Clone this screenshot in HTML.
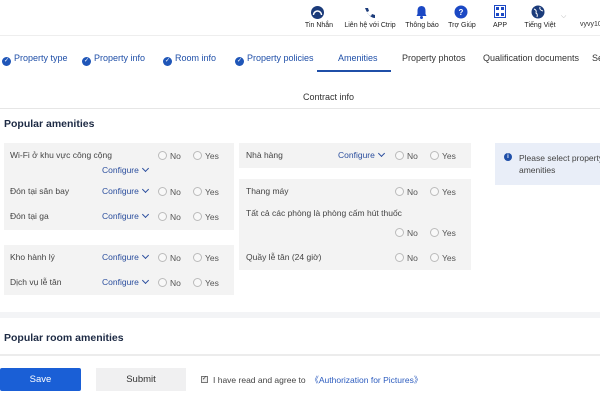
<!DOCTYPE html>
<html><head><meta charset="utf-8"><style>
*{margin:0;padding:0;box-sizing:border-box}
body{width:600px;height:400px;overflow:hidden;background:#fff;font-family:"Liberation Sans",sans-serif;font-size:9px;color:#333;position:relative}
.a{position:absolute;white-space:nowrap}
.ic{position:absolute;text-align:center;font-size:7px;color:#222}
.tab{position:absolute;top:53px;font-size:9px;color:#333}
.tab.d{color:#1f4fa8}
.tab.d:before{content:"✓";display:inline-block;width:9px;height:9px;border-radius:50%;background:#1f56b8;color:#fff;font-size:6px;line-height:9px;text-align:center;margin-right:3px;vertical-align:-1px}
.g{position:absolute;background:#f3f3f3}
.r{position:absolute;color:#555;font-size:8.5px}
.r:before{content:"";display:inline-block;width:7px;height:7px;border:1px solid #bbb;border-radius:50%;background:#f8f8f8;margin-right:3px;vertical-align:-1px}
.cf{position:absolute;color:#2c4f9e;font-size:8.5px}
.cf:after{content:"";display:inline-block;width:4px;height:4px;border-right:1px solid #2c4f9e;border-bottom:1px solid #2c4f9e;transform:rotate(45deg);margin-left:4px;vertical-align:2px}
.lb{position:absolute;color:#444;font-size:8.5px}
</style></head><body>
<svg class="a" style="left:310px;top:5px" width="15" height="15"><circle cx="7.5" cy="7.5" r="6.5" fill="#1b3b7a"/><path d="M3.5 10a4 4 0 0 1 8 0" stroke="#fff" stroke-width="1.5" fill="none"/></svg>
<div class="ic" style="left:303px;top:22px;width:32px">Tin Nhắn</div>
<svg class="a" style="left:363px;top:6px" width="13" height="13"><path d="M2 2l3 0 1 3-2 1q1 3 4 4l1-2 3 1v3q-6 0-10-10z" fill="#1b3b7a"/></svg>
<div class="ic" style="left:340px;top:22px;width:60px">Liên hệ với Ctrip</div>
<svg class="a" style="left:415px;top:5px" width="13" height="14"><path d="M6.5 1q4 0 4 5v3l1 2H1.5l1-2V6q0-5 4-5z" fill="#1b48c4"/><circle cx="6.5" cy="12.5" r="1.5" fill="#1b48c4"/></svg>
<div class="ic" style="left:402px;top:22px;width:40px">Thông báo</div>
<svg class="a" style="left:454px;top:5px" width="14" height="14"><circle cx="7" cy="7" r="6.5" fill="#1b48c4"/><text x="7" y="10" font-size="8" fill="#fff" text-anchor="middle" font-family="Liberation Sans" font-weight="bold">?</text></svg>
<div class="ic" style="left:444px;top:22px;width:36px">Trợ Giúp</div>
<svg class="a" style="left:494px;top:5px" width="12" height="13"><rect x="0.5" y="0.5" width="11" height="12" fill="none" stroke="#1b48c4"/><rect x="2" y="2" width="3" height="3" fill="#1b48c4"/><rect x="7" y="2" width="3" height="3" fill="#1b48c4"/><rect x="2" y="8" width="3" height="3" fill="#1b48c4"/><rect x="7" y="8" width="3" height="3" fill="#1b48c4"/></svg>
<div class="ic" style="left:488px;top:22px;width:24px">APP</div>
<svg class="a" style="left:531px;top:5px" width="14" height="14"><circle cx="7" cy="7" r="6.5" fill="#1b3b7a"/><path d="M3 4q3 1 2 4 2 1 1 4M9 2q-1 3 3 4" stroke="#fff" fill="none"/></svg>
<div class="ic" style="left:520px;top:22px;width:40px">Tiếng Việt</div>
<div class="a" style="left:561px;top:13px;color:#aaa;font-size:7px">⌵</div>
<div class="a" style="left:580px;top:21px;font-size:7px;color:#333">vyvy10</div>
<div class="a" style="left:0;top:35px;width:600px;height:1px;background:#eee"></div>
<div class="tab d" style="left:2px">Property type</div>
<div class="tab d" style="left:82px">Property info</div>
<div class="tab d" style="left:163px">Room info</div>
<div class="tab d" style="left:235px">Property policies</div>
<div class="tab" style="left:338px;color:#1f4fa8">Amenities</div>
<div class="a" style="left:317px;top:70px;width:74px;height:2px;background:#1f4fa8"></div>
<div class="tab" style="left:402px">Property photos</div>
<div class="tab" style="left:483px">Qualification documents</div>
<div class="tab" style="left:592px">Se</div>
<div class="a" style="left:303px;top:92px;font-size:9px">Contract info</div>
<div class="a" style="left:0;top:108px;width:600px;height:1px;background:#e6e6e6"></div>
<div class="a" style="left:4px;top:118px;font-size:10.5px;font-weight:bold;color:#1d2a44">Popular amenities</div>
<div class="g" style="left:4px;top:143px;width:230px;height:87px"></div>
<div class="g" style="left:4px;top:245px;width:230px;height:50px"></div>
<div class="g" style="left:239px;top:143px;width:232px;height:25px"></div>
<div class="g" style="left:239px;top:179px;width:232px;height:91px"></div>
<div class="lb" style="left:10px;top:150px">Wi-Fi ở khu vực công cộng</div>
<div class="r" style="left:158px;top:151px">No</div><div class="r" style="left:193px;top:151px">Yes</div>
<div class="cf" style="left:102px;top:165px">Configure</div>
<div class="lb" style="left:10px;top:186px">Đón tại sân bay</div>
<div class="cf" style="left:102px;top:186px">Configure</div>
<div class="r" style="left:158px;top:187px">No</div><div class="r" style="left:193px;top:187px">Yes</div>
<div class="lb" style="left:10px;top:211px">Đón tại ga</div>
<div class="cf" style="left:102px;top:211px">Configure</div>
<div class="r" style="left:158px;top:212px">No</div><div class="r" style="left:193px;top:212px">Yes</div>
<div class="lb" style="left:10px;top:252px">Kho hành lý</div>
<div class="cf" style="left:102px;top:252px">Configure</div>
<div class="r" style="left:158px;top:253px">No</div><div class="r" style="left:193px;top:253px">Yes</div>
<div class="lb" style="left:10px;top:277px">Dịch vụ lễ tân</div>
<div class="cf" style="left:102px;top:277px">Configure</div>
<div class="r" style="left:158px;top:278px">No</div><div class="r" style="left:193px;top:278px">Yes</div>
<div class="lb" style="left:246px;top:150px">Nhà hàng</div>
<div class="cf" style="left:338px;top:150px">Configure</div>
<div class="r" style="left:395px;top:151px">No</div><div class="r" style="left:430px;top:151px">Yes</div>
<div class="lb" style="left:246px;top:186px">Thang máy</div>
<div class="r" style="left:395px;top:187px">No</div><div class="r" style="left:430px;top:187px">Yes</div>
<div class="lb" style="left:246px;top:208px">Tất cả các phòng là phòng cấm hút thuốc</div>
<div class="r" style="left:395px;top:228px">No</div><div class="r" style="left:430px;top:228px">Yes</div>
<div class="lb" style="left:246px;top:252px">Quầy lễ tân (24 giờ)</div>
<div class="r" style="left:395px;top:253px">No</div><div class="r" style="left:430px;top:253px">Yes</div>
<div class="a" style="left:495px;top:143px;width:110px;height:42px;background:#e9eef8"></div>
<div class="a" style="left:504px;top:153px;width:8px;height:8px;border-radius:50%;background:#1f4fa8;color:#fff;font-size:6px;text-align:center;line-height:8px;font-weight:bold">i</div>
<div class="a" style="left:519px;top:152px;font-size:8.5px;color:#444;line-height:12px">Please select property<br>amenities</div>
<div class="a" style="left:0;top:312px;width:600px;height:6px;background:#f3f4f6"></div>
<div class="a" style="left:4px;top:332px;font-size:10.5px;font-weight:bold;color:#1d2a44">Popular room amenities</div>
<div class="a" style="left:0;top:354px;width:600px;height:2px;background:#ececec"></div>
<div class="a" style="left:0;top:368px;width:81px;height:23px;background:#1a5fd6;border-radius:2px;color:#fff;font-size:9.5px;text-align:center;line-height:23px">Save</div>
<div class="a" style="left:96px;top:368px;width:90px;height:23px;background:#f0f0f1;color:#333;font-size:9.5px;text-align:center;line-height:23px">Submit</div>
<div class="a" style="left:201px;top:376px;width:7px;height:7px;border:1px solid #777;background:#eee;font-size:6px;line-height:5px;text-align:center">✓</div>
<div class="a" style="left:213px;top:374px;font-size:8.5px;color:#444">I have read and agree to &nbsp;<span style="color:#2c5cbf">《Authorization for Pictures》</span></div>
</body></html>
